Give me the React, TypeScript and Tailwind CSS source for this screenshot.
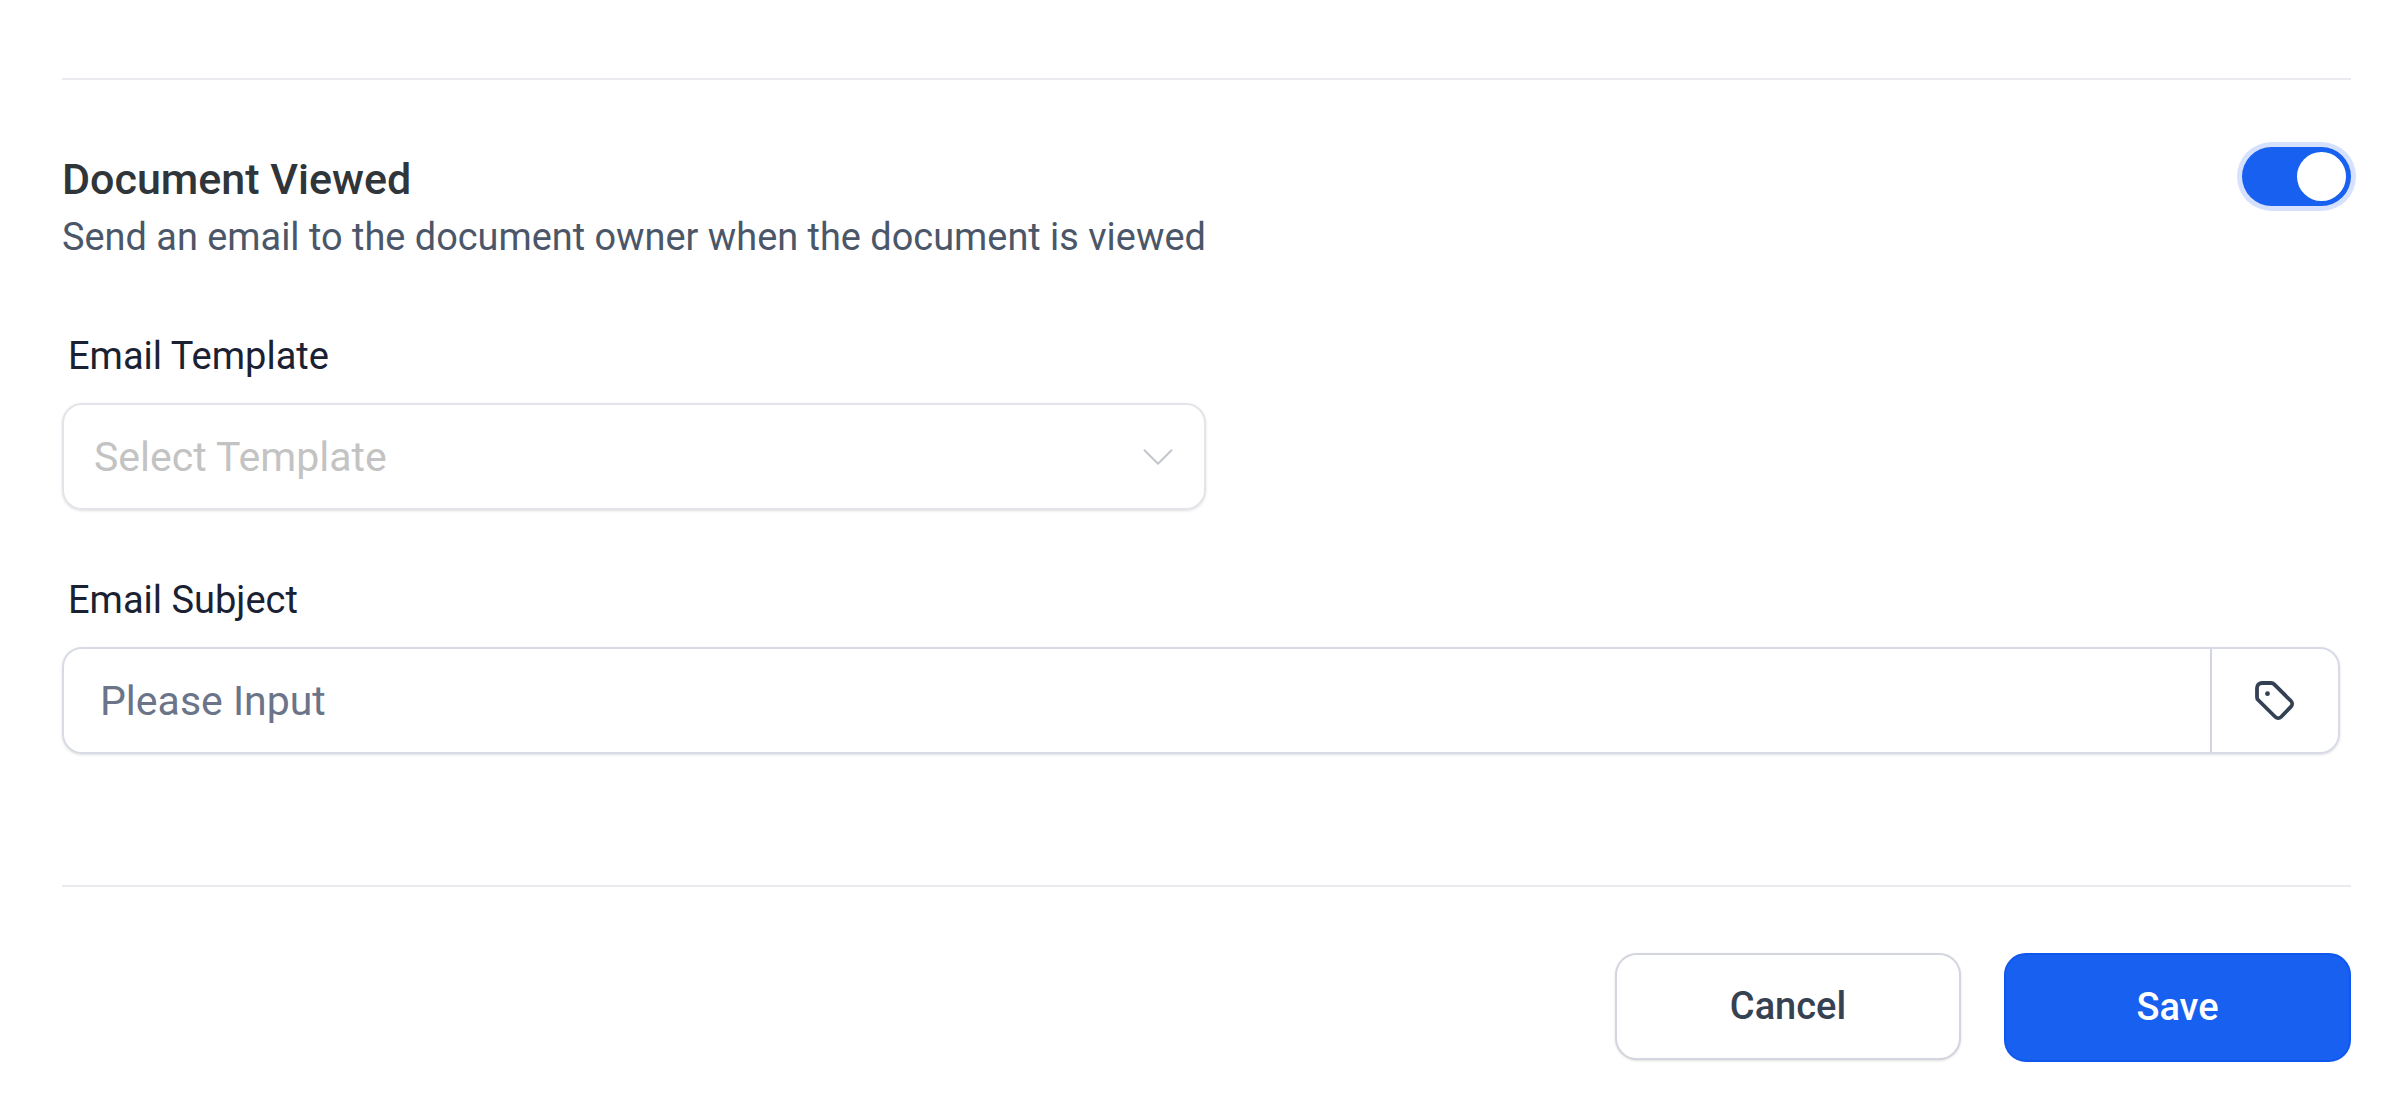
import { ChevronDown } from "lucide-react";

const App = () => {
  return (
    <div className="h-[1114px] w-full overflow-hidden bg-white font-['Roboto',sans-serif]">
      <div className="pl-[62px] pr-[39px] pt-[78px]">
        <div className="h-[2px] bg-[#e9ebef]" />

        {/* Header + toggle */}
        <div className="mt-[75px] flex items-start justify-between">
          <div>
            <h2 className="text-[43px] leading-[48px] font-medium text-[#2f3539]">Document Viewed</h2>
            <p className="mt-[12px] text-[37.9px] leading-[44px] text-[#4b5768]">
              Send an email to the document owner when the document is viewed
            </p>
          </div>
          <div className="mt-[-8px] flex h-[59px] w-[109px] items-center justify-end rounded-full bg-[#1860f0] pr-[5px] ring-[5px] ring-[#d6e2fd]">
            <div className="h-[49px] w-[49px] rounded-full bg-white" />
          </div>
        </div>

        {/* Template */}
        <div className="mt-[75px] pl-[6px] text-[38px] leading-[44px] text-[#1a2133]">Email Template</div>
        <div className="mt-[25px] flex h-[107px] w-[1144px] items-center justify-between rounded-[20px] border-2 border-[#e3e4e9] pl-[30px] pr-[19px] shadow-sm">
          <span className="pt-[3px] text-[41px] text-[#c3c3c3]">Select Template</span>
          <ChevronDown className="h-[54px] w-[54px] text-[#c3c6cc]" strokeWidth={0.9} />
        </div>

        {/* Subject */}
        <div className="mt-[68px] pl-[6px] text-[38px] leading-[44px] text-[#1a2133]">Email Subject</div>
        <div className="mt-[25px] mr-[11px] flex h-[107px] rounded-[20px] border-2 border-[#d8dbe5] shadow-sm">
          <div className="flex flex-1 items-center pl-[36px] pt-[3px] text-[41px] text-[#6b7488]">Please Input</div>
          <div className="flex w-[128px] items-center justify-center border-l-2 border-[#d0d5e0]">
            <svg viewBox="0 0 40 40" className="h-[40px] w-[40px] text-[#344054]" fill="none" stroke="currentColor" strokeWidth="3.8" strokeLinejoin="round">
              <path d="M2 7a5 5 0 0 1 5-5h9a4 4 0 0 1 3 1.2L36 20a4 4 0 0 1 0 5.6L26 36a4 4 0 0 1-5.6 0L3.2 19A4 4 0 0 1 2 16Z" />
              <circle cx="12.5" cy="12.7" r="2.4" fill="currentColor" stroke="none" />
            </svg>
          </div>
        </div>

        <div className="mt-[131px] h-[2px] bg-[#e9ebef]" />

        {/* Actions */}
        <div className="mt-[66px] flex justify-end gap-[43px]">
          <button className="h-[107px] w-[346px] rounded-[22px] border-2 border-[#d3d6df] bg-white text-[38px] font-medium text-[#364152] shadow-sm">
            Cancel
          </button>
          <button className="h-[109px] w-[347px] rounded-[22px] border-2 border-[#0f57ee] bg-[#1860f0] text-[38px] font-medium text-white">
            Save
          </button>
        </div>
      </div>
    </div>
  );
};

export default App;
